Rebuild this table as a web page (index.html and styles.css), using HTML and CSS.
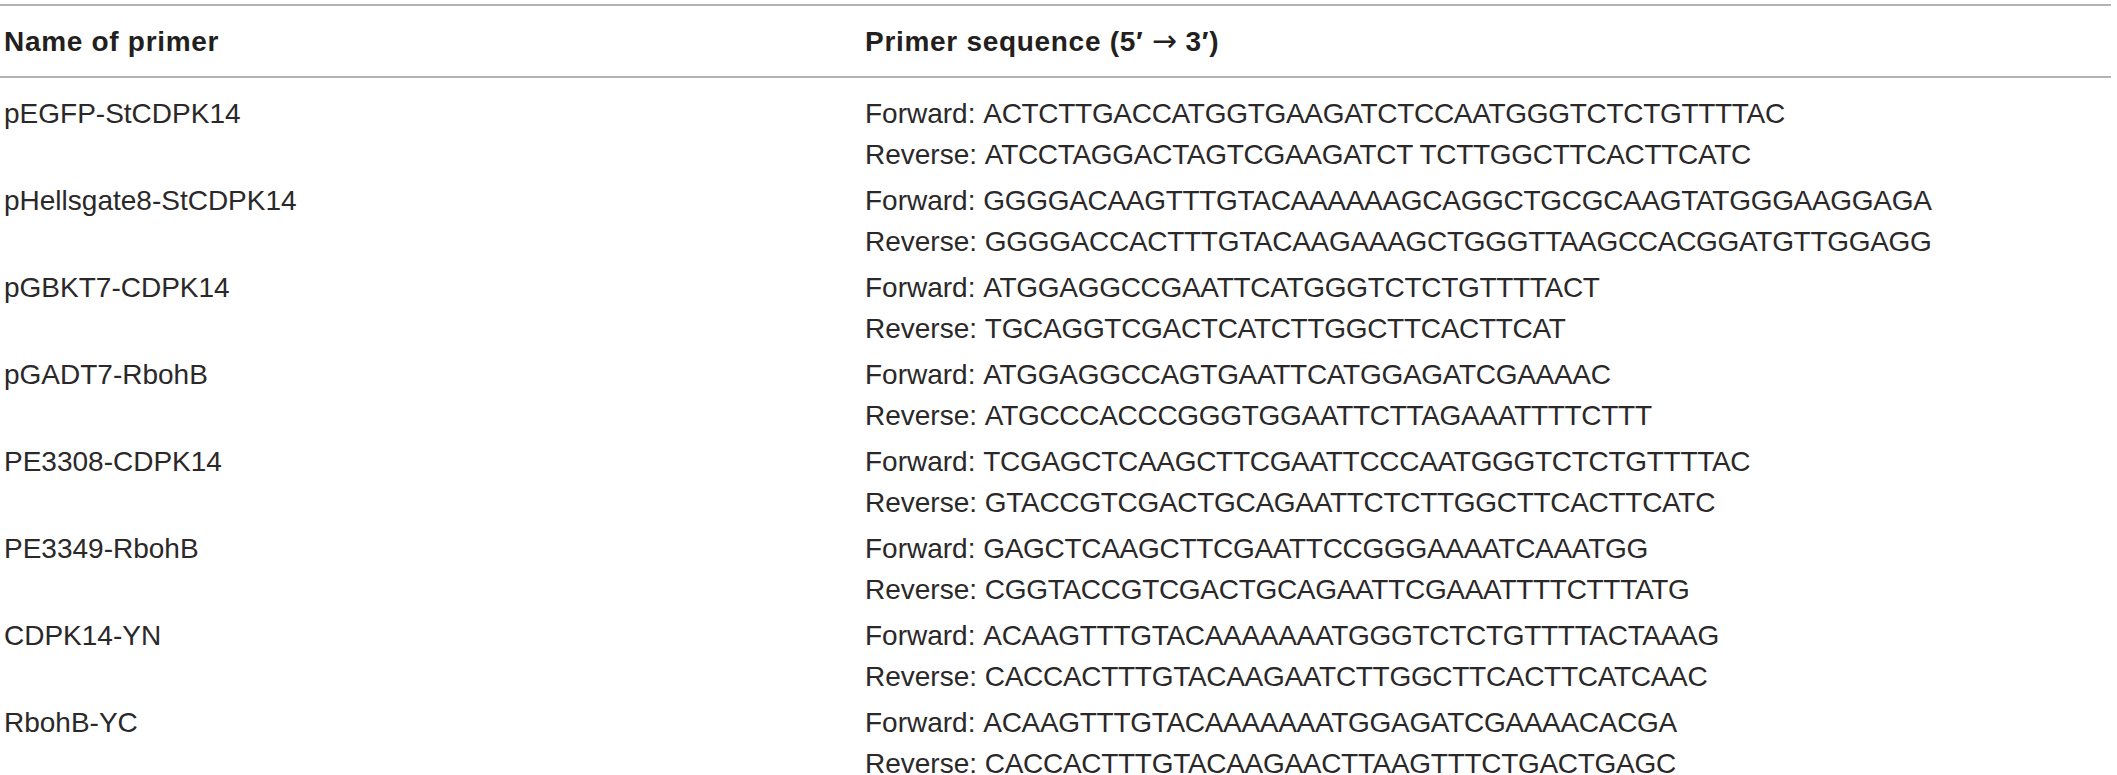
FILE: index.html
```html
<!DOCTYPE html>
<html lang="en">
<head>
    <meta charset="UTF-8">
    <title>Primers used in this study</title>
    <link rel="stylesheet" href="styles.css">
</head>
<body>
    <table class="primer-table">
        <thead>
            <tr>
                <th class="col-name">Name of primer</th>
                <th>Primer sequence (5′ <span class="arrow">→</span> 3′)</th>
            </tr>
        </thead>
        <tbody>
            <tr>
                <td>pEGFP-StCDPK14</td>
                <td>
                    <div>Forward: <span class="seq">ACTCTTGACCATGGTGAAGATCTCCAATGGGTCTCTGTTTTAC</span></div>
                    <div>Reverse: <span class="seq">ATCCTAGGACTAGTCGAAGATCT TCTTGGCTTCACTTCATC</span></div>
                </td>
            </tr>
            <tr>
                <td>pHellsgate8-StCDPK14</td>
                <td>
                    <div>Forward: <span class="seq">GGGGACAAGTTTGTACAAAAAAGCAGGCTGCGCAAGTATGGGAAGGAGA</span></div>
                    <div>Reverse: <span class="seq">GGGGACCACTTTGTACAAGAAAGCTGGGTTAAGCCACGGATGTTGGAGG</span></div>
                </td>
            </tr>
            <tr>
                <td>pGBKT7-CDPK14</td>
                <td>
                    <div>Forward: <span class="seq">ATGGAGGCCGAATTCATGGGTCTCTGTTTTACT</span></div>
                    <div>Reverse: <span class="seq">TGCAGGTCGACTCATCTTGGCTTCACTTCAT</span></div>
                </td>
            </tr>
            <tr>
                <td>pGADT7-RbohB</td>
                <td>
                    <div>Forward: <span class="seq">ATGGAGGCCAGTGAATTCATGGAGATCGAAAAC</span></div>
                    <div>Reverse: <span class="seq">ATGCCCACCCGGGTGGAATTCTTAGAAATTTTCTTT</span></div>
                </td>
            </tr>
            <tr>
                <td>PE3308-CDPK14</td>
                <td>
                    <div>Forward: <span class="seq">TCGAGCTCAAGCTTCGAATTCCCAATGGGTCTCTGTTTTAC</span></div>
                    <div>Reverse: <span class="seq">GTACCGTCGACTGCAGAATTCTCTTGGCTTCACTTCATC</span></div>
                </td>
            </tr>
            <tr>
                <td>PE3349-RbohB</td>
                <td>
                    <div>Forward: <span class="seq">GAGCTCAAGCTTCGAATTCCGGGAAAATCAAATGG</span></div>
                    <div>Reverse: <span class="seq">CGGTACCGTCGACTGCAGAATTCGAAATTTTCTTTATG</span></div>
                </td>
            </tr>
            <tr>
                <td>CDPK14-YN</td>
                <td>
                    <div>Forward: <span class="seq">ACAAGTTTGTACAAAAAAATGGGTCTCTGTTTTACTAAAG</span></div>
                    <div>Reverse: <span class="seq">CACCACTTTGTACAAGAATCTTGGCTTCACTTCATCAAC</span></div>
                </td>
            </tr>
            <tr>
                <td>RbohB-YC</td>
                <td>
                    <div>Forward: <span class="seq">ACAAGTTTGTACAAAAAAATGGAGATCGAAAACACGA</span></div>
                    <div>Reverse: <span class="seq">CACCACTTTGTACAAGAACTTAAGTTTCTGACTGAGC</span></div>
                </td>
            </tr>
        </tbody>
    </table>
</body>
</html>
```

FILE: styles.css
```css
body {
    margin: 0;
    font-family: "Liberation Sans", Arial, sans-serif;
    color: #2a2829;
    background-color: white;
}
.primer-table {
    width: 2111px;
    margin-top: 4px;
    border-collapse: collapse;
    font-size: 28px;
}
.primer-table th {
    font-weight: bold;
    text-align: left;
    line-height: 41px;
    letter-spacing: 0.7px;
    color: #231f20;
    padding: 14px 0 14px 4px;
    border-top: 2px solid #b3b3b3;
    border-bottom: 2px solid #b3b3b3;
}
.col-name {
    width: 857px;
}
.arrow {
    font-family: "DejaVu Sans", sans-serif;
    font-weight: normal;
    font-size: 30px;
    letter-spacing: 0;
}
.primer-table td {
    vertical-align: top;
    line-height: 41px;
    padding: 2px 0 3px 4px;
    white-space: nowrap;
}
.primer-table tbody tr:first-child td {
    padding-top: 15px;
}
.seq {
    letter-spacing: -0.3px;
}
```
